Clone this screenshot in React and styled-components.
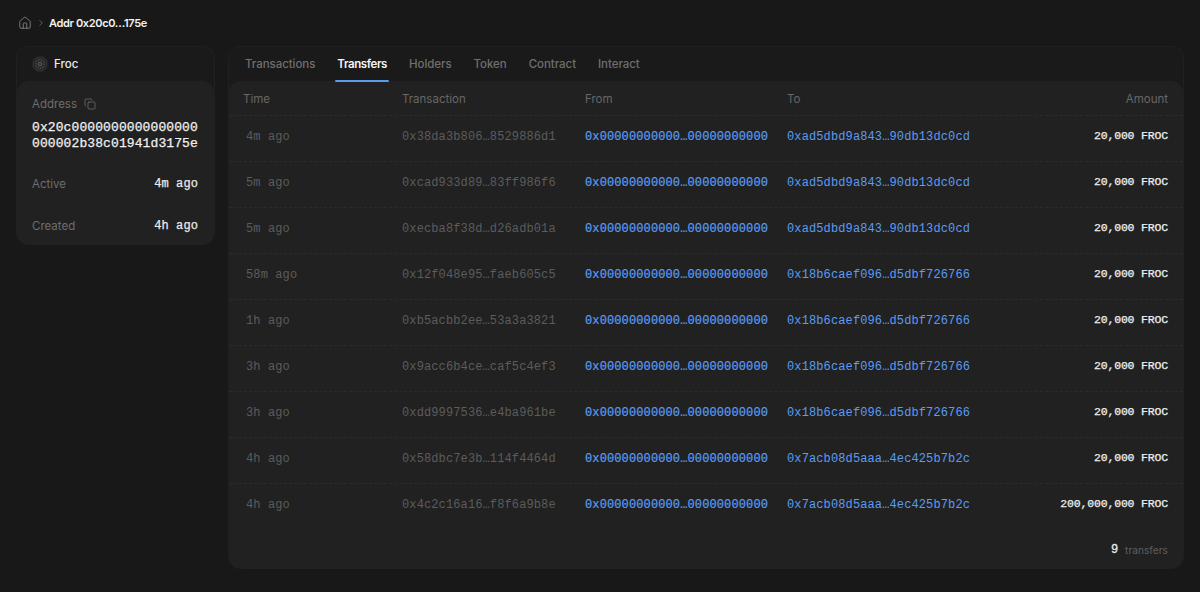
import React from "react";
import styled, { createGlobalStyle } from "styled-components";
import { Home, ChevronRight, Copy } from "lucide-react";

const sans = `Inter, "Noto Sans", sans-serif`;
const mono = `"Liberation Mono", "DejaVu Sans Mono", monospace`;

const GlobalStyle = createGlobalStyle`
  html, body {
    margin: 0;
    background: #181818;
    color: #fff;
    font-family: ${sans};
  }
`;

const Page = styled.div`
  height: 592px;
  overflow: hidden;
  padding: 0 16px;
  box-sizing: border-box;
`;

const Crumbs = styled.nav`
  height: 46px;
  display: flex;
  align-items: center;
  gap: 4px;
  padding-left: 2px;
  color: #8a8a8a;
`;

const CrumbText = styled.span`
  font-size: 11px;
  font-weight: 600;
  letter-spacing: -0.35px;
  color: #f2f2f2;
  margin-left: -1px;
`;

const Columns = styled.div`
  display: grid;
  grid-template-columns: 199px 956px;
  gap: 13px;
  align-items: start;
`;

const Card = styled.section`
  background: #1a1a1a;
  border: 1px solid #202020;
  border-bottom: 0;
  border-radius: 12px;
  overflow: hidden;
  box-sizing: border-box;
`;

const SideHead = styled.div`
  height: 34px;
  display: flex;
  align-items: center;
  gap: 6px;
  padding-left: 15px;
  font-size: 11.5px;
  font-weight: 500;
  color: #ececec;
`;

const CoinBadge = styled.span`
  width: 16px;
  height: 16px;
  border-radius: 50%;
  background: #2a2a2a;
  color: #5e5e5e;
  display: flex;
  align-items: center;
  justify-content: center;
`;

const SideBody = styled.div`
  background: #212121;
  border-radius: 12px;
  height: 164px;
  padding: 15px 15px 0;
  box-sizing: border-box;
`;

const AddrLabel = styled.div`
  display: flex;
  align-items: center;
  gap: 7px;
  font-size: 11.5px;
  color: #6d6d6d;
  height: 16px;
`;

const FullAddr = styled.div`
  font-family: ${mono};
  font-size: 13px;
  letter-spacing: 0.1px;
  -webkit-text-stroke: 0.25px currentColor;
  line-height: 16px;
  color: #f0f0f0;
  margin-top: 8px;
  word-break: break-all;
  width: 168px;
`;

const StatRow = styled.div`
  display: flex;
  justify-content: space-between;
  align-items: center;
  margin-top: ${(p) => p.$top}px;
  padding-right: 1px;
  font-size: 11.5px;
  color: #6d6d6d;
`;

const StatValue = styled.span`
  font-family: ${mono};
  font-size: 12px;
  letter-spacing: 0.1px;
  -webkit-text-stroke: 0.25px currentColor;
  color: #eaeaea;
`;

const Tabs = styled.div`
  height: 34px;
  display: flex;
  gap: 22px;
  padding-left: 16px;
`;

const Tab = styled.div`
  font-size: 11.5px;
  letter-spacing: ${(p) => (p.$active ? "-0.4px" : "-0.05px")};
  font-weight: ${(p) => (p.$active ? 600 : 500)};
  color: ${(p) => (p.$active ? "#f4f4f4" : "#6f6f6f")};
  line-height: 34px;
  position: relative;
  ${(p) =>
    p.$active &&
    `&::after {
      content: "";
      position: absolute;
      left: -2px;
      right: -2px;
      bottom: -1px;
      height: 2px;
      background: #5b9bea;
      border-radius: 1px;
    }`}
`;

const Panel = styled.div`
  background: #212121;
  border-radius: 12px;
  height: 488px;
  overflow: hidden;
`;

const Row = styled.div`
  display: grid;
  grid-template-columns: 159px 183px 202px 1fr auto;
  align-items: center;
  height: ${(p) => p.$h}px;
  padding: ${(p) => (p.$head ? "2px" : "0")} 15px ${(p) => (p.$head ? "0" : "3px")} 14px;
  border-bottom: 1px dashed #2b2b2b;
  box-sizing: border-box;
  &:nth-last-child(2) {
    border-bottom-color: transparent;
  }
`;

const HeadCell = styled.div`
  font-size: 11.5px;
  color: #676767;
  text-align: ${(p) => (p.$right ? "right" : "left")};
`;

const Cell = styled.div`
  font-family: ${mono};
  font-size: 12px;
  letter-spacing: 0.12px;
  color: #5c5c5c;
  white-space: nowrap;
  padding-left: ${(p) => p.$indent || 0}px;
`;

const LinkCell = styled(Cell)`
  color: #5a9cf5;
`;

const FromCell = styled(LinkCell)`
  -webkit-text-stroke: 0.2px currentColor;
`;

const Amount = styled(Cell)`
  font-size: 11.5px;
  letter-spacing: -0.17px;
  -webkit-text-stroke: 0.25px currentColor;
  color: #f0f0f0;
  text-align: right;
  margin-top: -3px;
`;

const Footer = styled.div`
  display: flex;
  justify-content: flex-end;
  align-items: center;
  gap: 7px;
  height: 40px;
  padding-right: 15px;
  font-size: 10.2px;
  color: #5f5f5f;
`;

const Count = styled.span`
  font-family: ${mono};
  font-size: 12px;
  -webkit-text-stroke: 0.3px currentColor;
  color: #eaeaea;
`;

const ZERO = "0x00000000000…00000000000";
const AD = "0xad5dbd9a843…90db13dc0cd";
const B18 = "0x18b6caef096…d5dbf726766";
const A7 = "0x7acb08d5aaa…4ec425b7b2c";

const transfers = [
  { time: "4m ago", tx: "0x38da3b806…8529886d1", to: AD, amount: "20,000" },
  { time: "5m ago", tx: "0xcad933d89…83ff986f6", to: AD, amount: "20,000" },
  { time: "5m ago", tx: "0xecba8f38d…d26adb01a", to: AD, amount: "20,000" },
  { time: "58m ago", tx: "0x12f048e95…faeb605c5", to: B18, amount: "20,000" },
  { time: "1h ago", tx: "0xb5acbb2ee…53a3a3821", to: B18, amount: "20,000" },
  { time: "3h ago", tx: "0x9acc6b4ce…caf5c4ef3", to: B18, amount: "20,000" },
  { time: "3h ago", tx: "0xdd9997536…e4ba961be", to: B18, amount: "20,000" },
  { time: "4h ago", tx: "0x58dbc7e3b…114f4464d", to: A7, amount: "20,000" },
  { time: "4h ago", tx: "0x4c2c16a16…f8f6a9b8e", to: A7, amount: "200,000,000" },
];

const tabs = ["Transactions", "Transfers", "Holders", "Token", "Contract", "Interact"];

function CoinIcon() {
  return (
    <svg width="10" height="10" viewBox="0 0 24 24" fill="none" stroke="currentColor" strokeWidth="2.4">
      <circle cx="12" cy="12" r="4" />
      <circle cx="12" cy="12" r="10" strokeDasharray="3 3" />
    </svg>
  );
}

export default function App() {
  return (
    <Page>
      <GlobalStyle />
      <Crumbs>
        <Home size={14} strokeWidth={1.4} />
        <ChevronRight size={10} strokeWidth={1.5} />
        <CrumbText>Addr 0x20c0…175e</CrumbText>
      </Crumbs>
      <Columns>
        <Card>
          <SideHead>
            <CoinBadge>
              <CoinIcon />
            </CoinBadge>
            Froc
          </SideHead>
          <SideBody>
            <AddrLabel>
              Address
              <Copy size={12} strokeWidth={1.6} />
            </AddrLabel>
            <FullAddr>0x20c0000000000000000000002b38c01941d3175e</FullAddr>
            <StatRow $top={25}>
              Active
              <StatValue>4m ago</StatValue>
            </StatRow>
            <StatRow $top={28}>
              Created
              <StatValue>4h ago</StatValue>
            </StatRow>
          </SideBody>
        </Card>
        <Card>
          <Tabs>
            {tabs.map((tab) => (
              <Tab key={tab} $active={tab === "Transfers"}>
                {tab}
              </Tab>
            ))}
          </Tabs>
          <Panel>
            <Row $h={35} $head>
              <HeadCell>Time</HeadCell>
              <HeadCell>Transaction</HeadCell>
              <HeadCell>From</HeadCell>
              <HeadCell>To</HeadCell>
              <HeadCell $right>Amount</HeadCell>
            </Row>
            {transfers.map((t) => (
              <Row $h={46} key={t.tx}>
                <Cell $indent={3}>{t.time}</Cell>
                <Cell>{t.tx}</Cell>
                <FromCell>{ZERO}</FromCell>
                <LinkCell>{t.to}</LinkCell>
                <Amount>{t.amount} FROC</Amount>
              </Row>
            ))}
            <Footer>
              <Count>9</Count>
              transfers
            </Footer>
          </Panel>
        </Card>
      </Columns>
    </Page>
  );
}
